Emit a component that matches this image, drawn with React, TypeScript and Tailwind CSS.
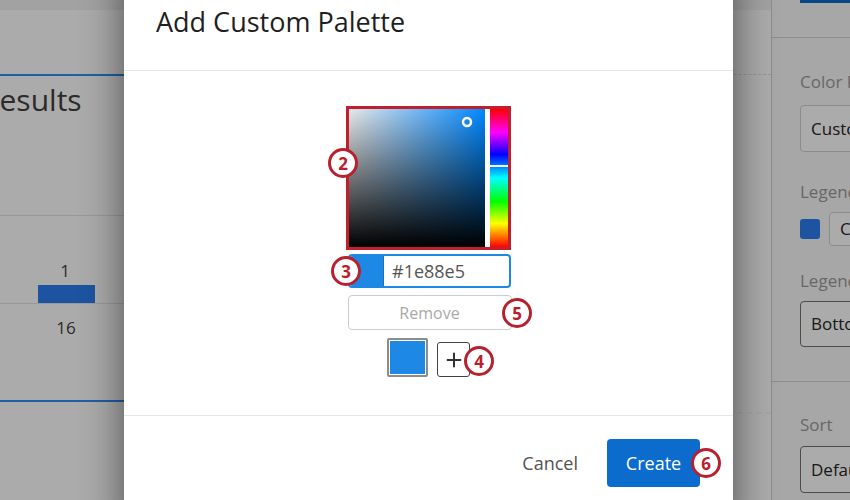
import { Plus } from "lucide-react";

type Badge = { n: number; left: string; top: string };

const badges: Badge[] = [
  { n: 2, left: "left-[328px]", top: "top-[148px]" },
  { n: 3, left: "left-[331px]", top: "top-[256px]" },
  { n: 5, left: "left-[502px]", top: "top-[298px]" },
  { n: 4, left: "left-[464px]", top: "top-[346px]" },
  { n: 6, left: "left-[691px]", top: "top-[448px]" },
];

function ColorPicker() {
  return (
    <div className="flex gap-[5px] border-[3px] border-[#c0202e] bg-white">
      <svg width="136" height="138" className="block">
        <defs>
          <linearGradient id="sat" x1="0" x2="1" y1="0" y2="0">
            <stop offset="0" stopColor="#e8e8e8" />
            <stop offset="1" stopColor="#0088ff" />
          </linearGradient>
          <linearGradient id="val" x1="0" x2="0" y1="0" y2="1">
            <stop offset="0" stopColor="#000" stopOpacity="0" />
            <stop offset="1" stopColor="#000" stopOpacity="1" />
          </linearGradient>
        </defs>
        <rect width="136" height="138" fill="url(#sat)" />
        <rect width="136" height="138" fill="url(#val)" />
        <circle cx="118" cy="13" r="4" fill="none" stroke="#fff" strokeWidth="2.5" />
      </svg>
      <svg width="18" height="138" className="block">
        <defs>
          <linearGradient id="hue" x1="0" x2="0" y1="0" y2="1">
            <stop offset="0" stopColor="#ff0000" />
            <stop offset="0.17" stopColor="#ff00ff" />
            <stop offset="0.33" stopColor="#0000ff" />
            <stop offset="0.5" stopColor="#00ffff" />
            <stop offset="0.67" stopColor="#00ff00" />
            <stop offset="0.83" stopColor="#ffff00" />
            <stop offset="1" stopColor="#ff0000" />
          </linearGradient>
        </defs>
        <rect width="18" height="138" fill="url(#hue)" />
        <rect y="56" width="18" height="2" fill="#fff" />
      </svg>
    </div>
  );
}

function Background() {
  return (
    <div className="flex h-full text-[#404040]">
      <div className="flex flex-1 flex-col bg-white">
        <div className="h-[10px] bg-[#f2f2f2]" />
        <div className="mt-[64px] flex">
          <div className="w-[700px] h-[328px] border-y-2 border-[#2f8ef7]">
            <div className="h-[139px] pt-[4px]">
              <span className="-ml-[19px] text-[30px] leading-[40px]">Results</span>
            </div>
            <div className="border-t border-[#e5e5e5] w-[124px]">
              <div className="h-[88px] border-b border-[#e5e5e5] flex flex-col items-center justify-end">
                <span className="text-[17px] leading-[24px] ml-[6px]">1</span>
                <div className="mt-[2px] ml-[9px] w-[57px] h-[18px] bg-[#2a7ef0]" />
              </div>
              <div className="flex justify-center pt-[12px] ml-[8px]">
                <span className="text-[17px] leading-[24px]">16</span>
              </div>
            </div>
          </div>
          <div className="flex-1 h-[340px] border-t border-dashed border-[#e0e0e0] border-b-2 border-b-[#f6f6f6]" />
        </div>
      </div>
      <div className="w-[79px] shrink-0 overflow-hidden border-l border-[#d2d2d2] bg-[#fafafa] whitespace-nowrap">
        <div className="h-[38px] border-b border-[#d2d2d2]">
          <div className="ml-[28px] w-[80px] h-[3px] bg-[#0b6bcb]" />
        </div>
        <div className="pl-[28px] pt-[32px] w-[240px]">
          <div className="text-[17px] leading-[24px] text-[#9a9a9a]">Color Palette</div>
          <div className="mt-[11px] h-[47px] w-[200px] rounded border border-[#cfcfcf] bg-white pl-[10px] flex items-center text-[17px] text-[#262626]">
            Custom Palette
          </div>
          <div className="mt-[28px] text-[17px] leading-[24px] text-[#9a9a9a]">Legend Colors</div>
          <div className="mt-[8px] flex items-center gap-[9px]">
            <div className="w-[20px] h-[20px] rounded-[3px] bg-[#2a7ef0]" />
            <div className="h-[34px] w-[160px] rounded border border-[#cfcfcf] bg-white pl-[10px] flex items-center text-[17px] text-[#262626]">
              Count
            </div>
          </div>
          <div className="mt-[23px] text-[17px] leading-[24px] text-[#9a9a9a]">Legend Position</div>
          <div className="mt-[8px] h-[46px] w-[200px] rounded border border-[#707070] bg-white pl-[10px] flex items-center text-[17px] text-[#262626]">
            Bottom
          </div>
        </div>
        <div className="mt-[34px] border-t border-[#d2d2d2] pl-[28px] pt-[31px] w-[240px]">
          <div className="text-[17px] leading-[24px] text-[#9a9a9a]">Sort</div>
          <div className="mt-[9px] h-[47px] w-[200px] rounded border border-[#707070] bg-white pl-[10px] flex items-center text-[17px] text-[#262626]">
            Default
          </div>
        </div>
      </div>
    </div>
  );
}

export default function App() {
  return (
    <div className="relative w-[850px] h-[500px] overflow-hidden bg-white font-['Open_Sans',sans-serif]">
      <Background />
      <div className="absolute inset-0 bg-black/[0.33]" />

      <div className="absolute left-[124px] top-[-30px] bottom-[-40px] w-[609px] flex flex-col rounded bg-white shadow-[0_0_40px_rgba(0,0,0,0.55)]">
        <div className="pl-[32px] pt-[34px] pb-[30px] border-b border-[#e6e6e6]">
          <h2 className="text-[27px] leading-[36px] text-[#1f1f1f]">Add Custom Palette</h2>
        </div>

        <div className="h-[345px] flex flex-col items-center pt-[35px] border-b border-[#e6e6e6]">
          <ColorPicker />
          <div className="mt-[4px] ml-[2px] flex h-[34px] w-[163px] overflow-hidden rounded border-2 border-[#1e88e5]">
            <div className="w-[34px] bg-[#1e88e5] border-r border-[#1872c4]" />
            <div className="flex-1 pl-[8px] flex items-center text-[18px] text-[#555]">#1e88e5</div>
          </div>
          <button className="mt-[7px] ml-[2px] h-[35px] w-[164px] rounded border border-[#cccccc] bg-white text-[16px] text-[#a9a9a9]">
            Remove
          </button>
          <div className="mt-[8px] flex items-end gap-[9px]">
            <div className="w-[41px] h-[39px] border-2 border-[#8c8c8c] p-[1px] bg-white rounded-[2px]">
              <div className="h-full w-full bg-[#1e88e5]" />
            </div>
            <div className="w-[33px] h-[35px] rounded-[3px] border border-[#444] flex items-center justify-center">
              <Plus size={22} strokeWidth={2.2} color="#333" />
            </div>
          </div>
        </div>

        <div className="flex justify-end items-center gap-[13px] pr-[33px] pt-[23px]">
          <button className="h-[48px] px-[16px] text-[18px] text-[#525252]">Cancel</button>
          <button className="h-[48px] w-[93px] rounded bg-[#0b6ccd] text-[18px] text-white">Create</button>
        </div>
      </div>

      {badges.map((b) => (
        <div
          key={b.n}
          className={`absolute ${b.left} ${b.top} w-[30px] h-[30px] rounded-full border-[3px] border-[#b8202d] bg-white flex items-center justify-center text-[17px] font-bold text-[#b8202d] leading-none`}
        >
          {b.n}
        </div>
      ))}
    </div>
  );
}
